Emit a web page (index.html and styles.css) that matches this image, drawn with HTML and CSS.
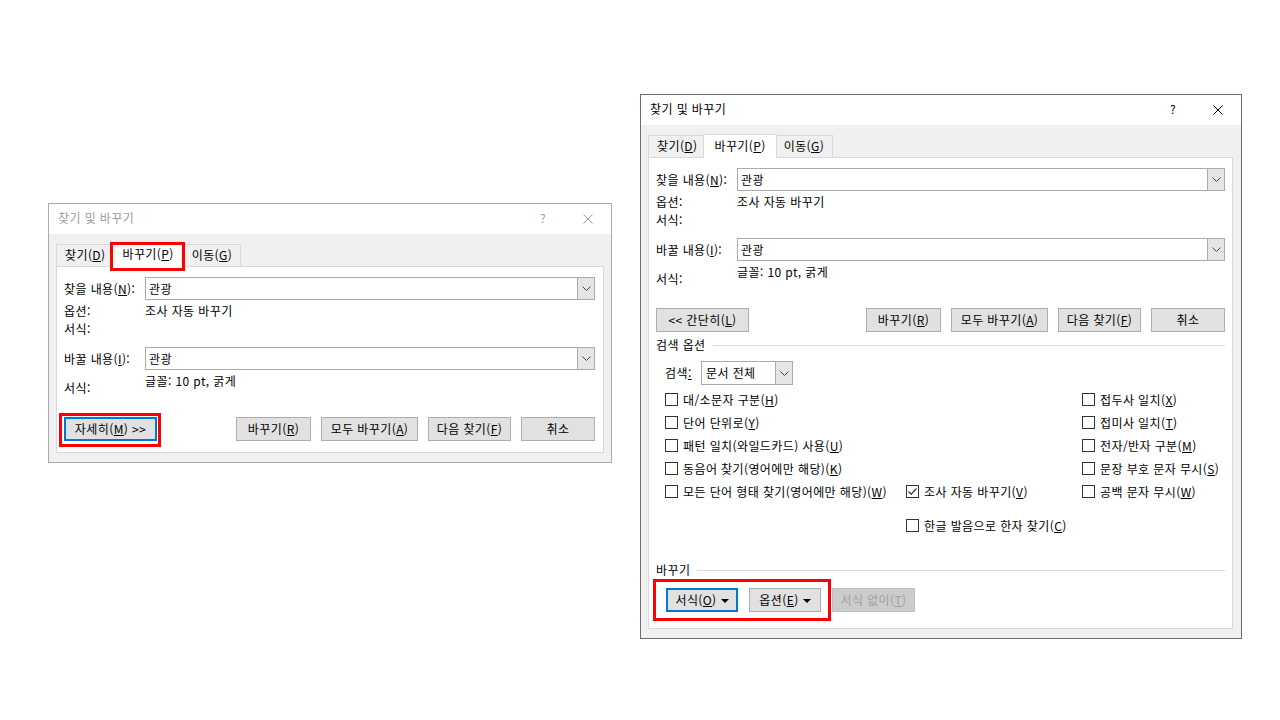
FILE: index.html
```html
<!DOCTYPE html>
<html lang="ko">
<head>
  <meta charset="UTF-8">
  <title>찾기 및 바꾸기</title>
  <link rel="stylesheet" href="styles.css">
</head>
<body>

  <!-- small dialog -->
  <div class="dialog dialog-small inactive">
    <div class="titlebar">
      <span class="title">찾기 및 바꾸기</span>
      <span class="help">?</span>
      <span class="close"><svg viewBox="0 0 10 10"><path d="M0.5 0.5L9.5 9.5M9.5 0.5L0.5 9.5"/></svg></span>
    </div>
    <div class="body">
      <div class="tabs">
        <div class="tab">찾기(<u>D</u>)</div>
        <div class="tab active">바꾸기(<u>P</u>)</div>
        <div class="tab">이동(<u>G</u>)</div>
      </div>
      <div class="panel">
        <div class="field">
          <span class="field-label">찾을 내용(<u>N</u>):</span>
          <div class="combo"><span class="combo-text">관광</span><span class="combo-btn"><svg viewBox="0 0 9 5"><path d="M0.5 0.5L4.5 4.5L8.5 0.5"/></svg></span></div>
        </div>
        <div class="info info-first"><span class="info-label">옵션:</span><span>조사 자동 바꾸기</span></div>
        <div class="info"><span class="info-label">서식:</span><span></span></div>
        <div class="field field-second">
          <span class="field-label">바꿀 내용(<u>I</u>):</span>
          <div class="combo"><span class="combo-text">관광</span><span class="combo-btn"><svg viewBox="0 0 9 5"><path d="M0.5 0.5L4.5 4.5L8.5 0.5"/></svg></span></div>
        </div>
        <div class="info info-format"><span class="info-label">서식:</span><span>글꼴: 10 pt, 굵게</span></div>
        <div class="buttons">
          <button class="btn btn-more btn-focus">자세히(<u>M</u>) &gt;&gt;</button>
          <div class="btn-group">
            <button class="btn btn-replace">바꾸기(<u>R</u>)</button>
            <button class="btn btn-all">모두 바꾸기(<u>A</u>)</button>
            <button class="btn btn-next">다음 찾기(<u>F</u>)</button>
            <button class="btn btn-cancel">취소</button>
          </div>
        </div>
      </div>
    </div>
    <div class="mark mark-tab"></div>
    <div class="mark mark-more"></div>
  </div>

  <!-- expanded dialog -->
  <div class="dialog dialog-large">
    <div class="titlebar">
      <span class="title">찾기 및 바꾸기</span>
      <span class="help">?</span>
      <span class="close"><svg viewBox="0 0 10 10"><path d="M0.5 0.5L9.5 9.5M9.5 0.5L0.5 9.5"/></svg></span>
    </div>
    <div class="body">
      <div class="tabs">
        <div class="tab">찾기(<u>D</u>)</div>
        <div class="tab active">바꾸기(<u>P</u>)</div>
        <div class="tab">이동(<u>G</u>)</div>
      </div>
      <div class="panel">
        <div class="field">
          <span class="field-label">찾을 내용(<u>N</u>):</span>
          <div class="combo"><span class="combo-text">관광</span><span class="combo-btn"><svg viewBox="0 0 9 5"><path d="M0.5 0.5L4.5 4.5L8.5 0.5"/></svg></span></div>
        </div>
        <div class="info info-first"><span class="info-label">옵션:</span><span>조사 자동 바꾸기</span></div>
        <div class="info"><span class="info-label">서식:</span><span></span></div>
        <div class="field field-second">
          <span class="field-label">바꿀 내용(<u>I</u>):</span>
          <div class="combo"><span class="combo-text">관광</span><span class="combo-btn"><svg viewBox="0 0 9 5"><path d="M0.5 0.5L4.5 4.5L8.5 0.5"/></svg></span></div>
        </div>
        <div class="info info-format"><span class="info-label">서식:</span><span>글꼴: 10 pt, 굵게</span></div>
        <div class="buttons">
          <button class="btn btn-more">&lt;&lt; 간단히(<u>L</u>)</button>
          <div class="btn-group">
            <button class="btn btn-replace">바꾸기(<u>R</u>)</button>
            <button class="btn btn-all">모두 바꾸기(<u>A</u>)</button>
            <button class="btn btn-next">다음 찾기(<u>F</u>)</button>
            <button class="btn btn-cancel">취소</button>
          </div>
        </div>

        <div class="group-title">검색 옵션</div>
        <div class="search-row">
          <span class="search-label">검색<u>:</u></span>
          <div class="select"><span class="combo-text">문서 전체</span><span class="combo-btn"><svg viewBox="0 0 9 5"><path d="M0.5 0.5L4.5 4.5L8.5 0.5"/></svg></span></div>
        </div>

        <div class="options">
          <div class="opt c1"><span class="check"></span>대/소문자 구분(<u>H</u>)</div>
          <div class="opt c3"><span class="check"></span>접두사 일치(<u>X</u>)</div>
          <div class="opt c1"><span class="check"></span>단어 단위로(<u>Y</u>)</div>
          <div class="opt c3"><span class="check"></span>접미사 일치(<u>T</u>)</div>
          <div class="opt c1"><span class="check"></span>패턴 일치(와일드카드) 사용(<u>U</u>)</div>
          <div class="opt c3"><span class="check"></span>전자/반자 구분(<u>M</u>)</div>
          <div class="opt c1"><span class="check"></span>동음어 찾기(영어에만 해당)(<u>K</u>)</div>
          <div class="opt c3"><span class="check"></span>문장 부호 문자 무시(<u>S</u>)</div>
          <div class="opt c1"><span class="check"></span>모든 단어 형태 찾기(영어에만 해당)(<u>W</u>)</div>
          <div class="opt c2"><span class="check"><svg viewBox="0 0 11 11"><path d="M1.5 5.5L4.2 8.2L9.5 2.5"/></svg></span>조사 자동 바꾸기(<u>V</u>)</div>
          <div class="opt c3"><span class="check"></span>공백 문자 무시(<u>W</u>)</div>
          <div class="opt c2 last-row"><span class="check"></span>한글 발음으로 한자 찾기(<u>C</u>)</div>
        </div>

        <div class="group-title replace-title">바꾸기</div>
        <div class="format-buttons">
          <button class="btn btn-format btn-focus">서식(<u>O</u>)<span class="caret"></span></button>
          <button class="btn btn-format">옵션(<u>E</u>)<span class="caret"></span></button>
          <button class="btn btn-noformat" disabled>서식 없이(<u>T</u>)</button>
        </div>
      </div>
    </div>
    <div class="mark mark-format"></div>
  </div>

</body>
</html>
```

FILE: styles.css
```css
body {
  margin: 0;
  background-color: #ffffff;
  font-family: "Noto Sans CJK KR", "Noto Sans", sans-serif;
  font-size: 12px;
  letter-spacing: 0.4px;
  color: #000000;
}
.dialog {
  position: absolute;
  box-sizing: border-box;
  background-color: #f0f0f0;
  display: flex;
  flex-direction: column;
}
.dialog-small {
  left: 48px;
  top: 203px;
  width: 564px;
  height: 260px;
  border: 1px solid #ababab;
}
.dialog-large {
  left: 640px;
  top: 94px;
  width: 602px;
  height: 545px;
  border: 1px solid #6e6e6e;
}
.titlebar {
  flex: none;
  height: 30px;
  box-sizing: border-box;
  background-color: #ffffff;
  display: flex;
  align-items: center;
  padding: 0 18px 3px 9px;
}
.title {
  flex: 1;
}
.help {
  margin-right: 37px;
}
.close svg {
  display: block;
  width: 10px;
  height: 10px;
  margin-top: 3px;
  fill: none;
  stroke: currentColor;
  stroke-width: 1;
}
.inactive .titlebar {
  color: #9b9b9b;
}
.body {
  flex: 1;
  display: flex;
  flex-direction: column;
  padding: 8px 7px 9px 7px;
}
.dialog-large .body {
  padding: 9px 8px 9px 7px;
}
.tabs {
  display: flex;
  align-items: flex-end;
  height: 24px;
  flex: none;
}
.dialog-large .tabs {
  height: 23px;
}
.tab {
  box-sizing: border-box;
  height: 22px;
  padding: 0 8px;
  border: 1px solid #d9d9d9;
  border-bottom: none;
  background-color: #f0f0f0;
  line-height: 19px;
  margin-right: -1px;
}
.tab.active {
  position: relative;
  z-index: 1;
  height: 25px;
  margin: 0 -2px -1px -2px;
  padding: 0 10px;
  background-color: #ffffff;
  line-height: 22px;
}
.dialog-large .tab.active {
  height: 24px;
}
.panel {
  flex: 1;
  background-color: #ffffff;
  border: 1px solid #d9d9d9;
  padding: 10px 8px 0 7px;
  line-height: 18px;
}
.dialog-large .panel {
  padding-right: 7px;
}
.field {
  display: flex;
  align-items: center;
  height: 23px;
}
.field-second {
  margin-top: 9px;
}
.field-label {
  width: 81px;
  flex: none;
}
.combo,
.select {
  flex: 1;
  box-sizing: border-box;
  height: 23px;
  border: 1px solid #ababab;
  background-color: #ffffff;
  display: flex;
  align-items: center;
}
.combo-text {
  flex: 1;
  padding-left: 3px;
}
.combo-btn {
  align-self: stretch;
  width: 16px;
  background-color: #e5e5e5;
  border-left: 1px solid #ababab;
  display: flex;
  align-items: center;
  justify-content: center;
}
.combo-btn svg {
  width: 9px;
  height: 5px;
  fill: none;
  stroke: #444444;
  stroke-width: 1;
}
.info {
  display: flex;
}
.info-first {
  margin-top: 2px;
}
.info-label {
  width: 81px;
  flex: none;
}
.info-format {
  margin-top: 2px;
}
.info-format .info-label {
  padding-top: 7px;
}
.buttons {
  display: flex;
  justify-content: space-between;
  margin-top: 20px;
}
.btn-group {
  display: flex;
  gap: 10px;
}
.btn {
  box-sizing: border-box;
  height: 24px;
  padding: 0;
  border: 1px solid #adadad;
  background-color: #e1e1e1;
  font: inherit;
  letter-spacing: inherit;
  color: #000000;
  text-align: center;
  line-height: 20px;
}
.btn-focus {
  border: 2px solid #0078d7;
}
.btn-more {
  width: 93px;
}
.btn-replace {
  width: 75px;
}
.btn-all {
  width: 97px;
}
.btn-next {
  width: 83px;
}
.btn-cancel {
  width: 74px;
}
.group-title {
  display: flex;
  align-items: center;
  margin-top: 4px;
  height: 18px;
}
.group-title::after {
  content: "";
  flex: 1;
  height: 1px;
  margin-left: 7px;
  background-color: #dcdcdc;
}
.search-row {
  display: flex;
  align-items: center;
  margin-top: 7px;
  padding-left: 9px;
}
.search-label {
  width: 36px;
}
.select {
  flex: none;
  width: 92px;
  height: 24px;
}
.select .combo-text {
  padding-left: 4px;
}
.options {
  display: grid;
  grid-template-columns: 241px 176px auto;
  padding-left: 9px;
  margin-top: 3px;
}
.opt {
  display: flex;
  align-items: center;
  height: 23px;
  white-space: nowrap;
}
.c1 {
  grid-column: 1;
}
.c2 {
  grid-column: 2;
}
.c3 {
  grid-column: 3;
}
.last-row {
  margin-top: 11px;
}
.check {
  flex: none;
  box-sizing: border-box;
  width: 13px;
  height: 13px;
  margin-right: 5px;
  border: 1px solid #333333;
  background-color: #ffffff;
}
.check svg {
  display: block;
  width: 11px;
  height: 11px;
  fill: none;
  stroke: #333333;
  stroke-width: 1.2;
}
.replace-title {
  margin-top: 24px;
}
.format-buttons {
  display: flex;
  gap: 11px;
  margin-top: 9px;
  padding-left: 10px;
}
.btn-format {
  width: 72px;
}
.btn-noformat {
  width: 83px;
  background-color: #cccccc;
  border-color: #bfbfbf;
  color: #a0a0a0;
}
.caret {
  display: inline-block;
  margin-left: 4px;
  vertical-align: 2px;
  border-left: 4px solid transparent;
  border-right: 4px solid transparent;
  border-top: 4px solid #000000;
}
.mark {
  position: absolute;
  z-index: 2;
  box-sizing: border-box;
  border: 3px solid #ff0000;
}
.mark-tab {
  left: 61px;
  top: 38px;
  width: 75px;
  height: 29px;
}
.mark-more {
  left: 10px;
  top: 209px;
  width: 102px;
  height: 34px;
}
.mark-format {
  left: 12px;
  top: 484px;
  width: 178px;
  height: 42px;
}
```
